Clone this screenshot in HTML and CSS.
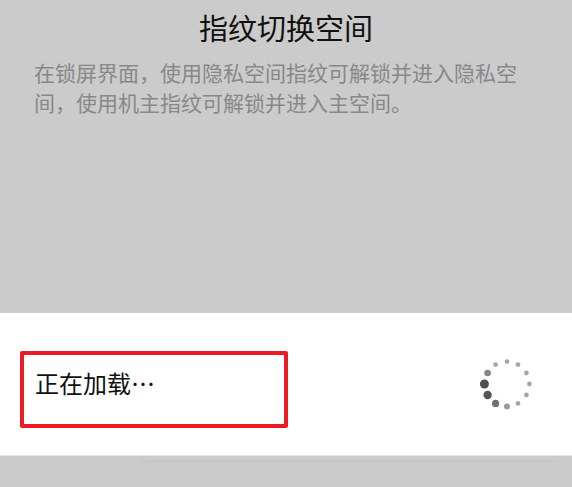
FILE: index.html
```html
<!DOCTYPE html>
<html lang="zh-CN">
<head>
  <meta charset="UTF-8">
  <title>指纹切换空间</title>
  <meta name="viewport" content="width=device-width, initial-scale=1.0">
  <link rel="stylesheet" href="styles.css">
</head>
<body>

  <div class="screen">
    <!-- Page behind the dialog -->
    <div class="backdrop">
      <h1 class="title">指纹切换空间</h1>
      <p class="desc">在锁屏界面，使用隐私空间指纹可解锁并进入隐私空间，使用机主指纹可解锁并进入主空间。</p>
    </div>

    <!-- Loading dialog -->
    <div class="dialog">
      <span class="loading-text">正在加载…</span>
      <svg class="spinner" width="60" height="60" viewBox="0 0 60 60">
        <circle cx="7.4" cy="30" r="4.5" fill="#505050"/>
        <circle cx="10.6" cy="41" r="4.2" fill="#555"/>
        <circle cx="18.6" cy="49.4" r="3.6" fill="#707070"/>
        <circle cx="30" cy="52.4" r="3" fill="#999"/>
        <circle cx="41" cy="49.4" r="2.4" fill="#a6a6a6"/>
        <circle cx="49.4" cy="41" r="2.4" fill="#a6a6a6"/>
        <circle cx="52.4" cy="30" r="2.4" fill="#a6a6a6"/>
        <circle cx="49.4" cy="19" r="2.4" fill="#a6a6a6"/>
        <circle cx="41" cy="10.6" r="2.4" fill="#a6a6a6"/>
        <circle cx="30" cy="7.6" r="2.4" fill="#a6a6a6"/>
        <circle cx="18.6" cy="10.6" r="2.4" fill="#a6a6a6"/>
        <circle cx="10.6" cy="19" r="3.3" fill="#858585"/>
      </svg>
    </div>

    <div class="below">
      <div class="card-edge"></div>
    </div>

    <!-- Red annotation drawn over the screenshot -->
    <div class="highlight"></div>
  </div>

</body>
</html>
```

FILE: styles.css
```css
html, body {
  margin: 0;
  padding: 0;
}
body {
  font-family: "Noto Sans CJK SC", "Noto Sans", sans-serif;
  background: #cbcbcb;
}
.screen {
  position: relative;
  width: 572px;
  height: 487px;
  overflow: hidden;
  display: flex;
  flex-direction: column;
}
.backdrop {
  height: 313px;
  padding: 0 35px;
  background: #cbcbcb;
}
.title {
  margin: 7px 0 0;
  font-size: 29px;
  font-weight: 400;
  line-height: 40px;
  text-align: center;
  color: #111;
}
.desc {
  margin: 10px 0 0 -1px;
  width: 490px;
  font-size: 21px;
  line-height: 30px;
  color: #888;
}
.dialog {
  height: 142px;
  padding: 0 14px 0 35px;
  background: #fff;
  display: flex;
  align-items: center;
  justify-content: space-between;
}
.loading-text {
  font-size: 24px;
  line-height: 34px;
  color: #111;
  margin-top: -3px;
}
.spinner {
  margin-right: 21px;
  flex-shrink: 0;
}
.below {
  flex: 1;
  padding: 0 15px 0 141px;
  border-top: 1px solid #e6e6e6;
  background: #cbcbcb;
}
.card-edge {
  height: 5px;
  border: 1px solid #c2c2c2;
  border-top: none;
  border-right: none;
  border-radius: 0 0 0 6px;
}
.highlight {
  position: absolute;
  left: 20px;
  top: 351px;
  width: 260px;
  height: 69px;
  border: 4px solid #ed1c24;
  border-radius: 2px;
}
```
